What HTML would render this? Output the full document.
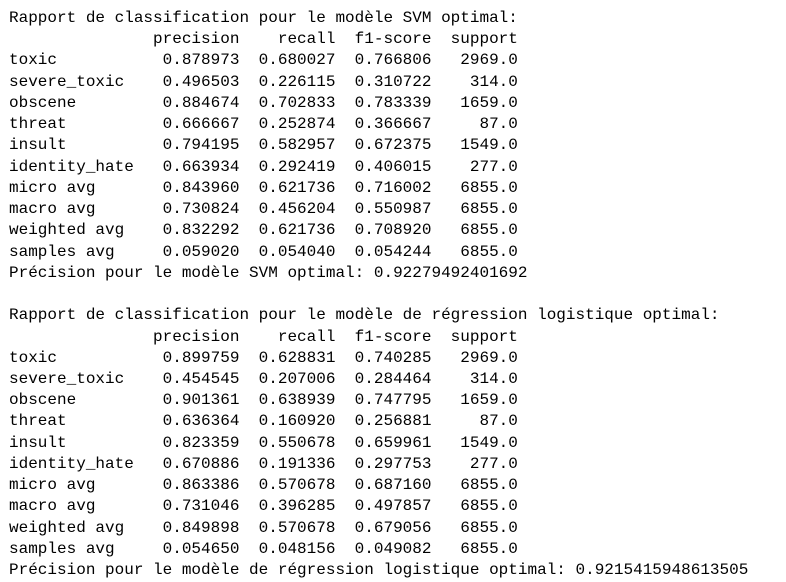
<!DOCTYPE html>
<html><head><meta charset="utf-8"><style>
html,body{margin:0;padding:0;background:#fff;width:786px;height:582px;overflow:hidden}
pre{margin:0;padding:8px 0 0 9px;font-family:"Liberation Mono",monospace;font-size:16px;line-height:21.23px;color:#000}
</style></head><body><pre>Rapport de classification pour le modèle SVM optimal:
               precision    recall  f1-score  support
toxic           0.878973  0.680027  0.766806   2969.0
severe_toxic    0.496503  0.226115  0.310722    314.0
obscene         0.884674  0.702833  0.783339   1659.0
threat          0.666667  0.252874  0.366667     87.0
insult          0.794195  0.582957  0.672375   1549.0
identity_hate   0.663934  0.292419  0.406015    277.0
micro avg       0.843960  0.621736  0.716002   6855.0
macro avg       0.730824  0.456204  0.550987   6855.0
weighted avg    0.832292  0.621736  0.708920   6855.0
samples avg     0.059020  0.054040  0.054244   6855.0
Précision pour le modèle SVM optimal: 0.92279492401692

Rapport de classification pour le modèle de régression logistique optimal:
               precision    recall  f1-score  support
toxic           0.899759  0.628831  0.740285   2969.0
severe_toxic    0.454545  0.207006  0.284464    314.0
obscene         0.901361  0.638939  0.747795   1659.0
threat          0.636364  0.160920  0.256881     87.0
insult          0.823359  0.550678  0.659961   1549.0
identity_hate   0.670886  0.191336  0.297753    277.0
micro avg       0.863386  0.570678  0.687160   6855.0
macro avg       0.731046  0.396285  0.497857   6855.0
weighted avg    0.849898  0.570678  0.679056   6855.0
samples avg     0.054650  0.048156  0.049082   6855.0
Précision pour le modèle de régression logistique optimal: 0.9215415948613505</pre></body></html>
